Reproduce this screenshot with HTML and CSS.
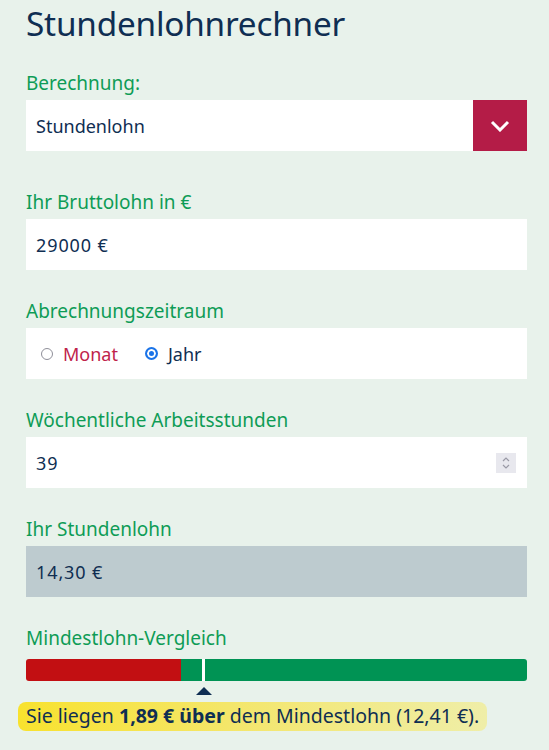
FILE: index.html
```html
<!DOCTYPE html>
<html lang="de">
<head>
<meta charset="utf-8">
<link rel="stylesheet" href="styles.css">
</head>
<body>
<div class="calc">
  <h1 class="title">Stundenlohnrechner</h1>

  <div class="field field-first">
    <div class="label">Berechnung:</div>
    <div class="box select">
      <span class="value">Stundenlohn</span>
      <span class="select-btn">
        <svg width="20" height="12" viewBox="0 0 20 12"><path d="M2 2 L10 10 L18 2" fill="none" stroke="#fff" stroke-width="3"/></svg>
      </span>
    </div>
  </div>

  <div class="field field-second">
    <div class="label">Ihr Bruttolohn in €</div>
    <div class="box"><span class="value num">29000 €</span></div>
  </div>

  <div class="field">
    <div class="label">Abrechnungszeitraum</div>
    <div class="box radios">
      <label class="radio"><span class="dot"></span><span class="r-text monat">Monat</span></label>
      <label class="radio"><span class="dot on"></span><span class="r-text">Jahr</span></label>
    </div>
  </div>

  <div class="field">
    <div class="label">Wöchentliche Arbeitsstunden</div>
    <div class="box number">
      <span class="value num">39</span>
      <span class="spin">
        <svg width="20" height="20" viewBox="0 0 20 20"><path d="M7 8 L10 5 L13 8 M7 12 L10 15 L13 12" fill="none" stroke="#9a9aa6" stroke-width="1.2"/></svg>
      </span>
    </div>
  </div>

  <div class="field">
    <div class="label">Ihr Stundenlohn</div>
    <div class="box output"><span class="value num">14,30 €</span></div>
  </div>

  <div class="field">
    <div class="label">Mindestlohn-Vergleich</div>
    <div class="bar">
      <div class="bar-red"></div>
      <div class="bar-green"></div>
      <div class="marker"></div>
      <div class="pointer"></div>
    </div>
    <div class="result">Sie liegen <b>1,89 € über</b> dem Mindestlohn (12,41 €).</div>
  </div>
</div>
</body>
</html>
```

FILE: styles.css
```css
html, body {
  margin: 0;
  padding: 0;
  background: #e8f2eb;
}
body {
  font-family: "Noto Sans", "Open Sans", sans-serif;
  color: #0f2e52;
}
.calc {
  padding: 0 22px 0 26px;
}
.title {
  margin: 0;
  padding-top: 1px;
  height: 45px;
  font-size: 33.3px;
  font-weight: 400;
  line-height: 44px;
  color: #0f2e52;
  letter-spacing: -0.2px;
}
.field {
  margin-top: 29px;
}
.field-first {
  margin-top: 25px;
}
.field-second {
  margin-top: 39px;
}
.label {
  font-size: 19px;
  line-height: 24px;
  color: #0e9c56;
  margin-bottom: 5px;
}
.box {
  height: 51px;
  background: #fff;
  display: flex;
  align-items: center;
  position: relative;
}
.value {
  padding-left: 10px;
  font-size: 18px;
  color: #0f2e52;
}
.value.num {
  letter-spacing: 0.9px;
}
.select {
  justify-content: space-between;
}
.select-btn {
  width: 54px;
  height: 51px;
  background: #b41c47;
  display: flex;
  align-items: center;
  justify-content: center;
}
.radios {
  padding-left: 15px;
  gap: 27px;
}
.radio {
  display: flex;
  align-items: center;
  gap: 10px;
}
.dot {
  width: 10px;
  height: 10px;
  border-radius: 50%;
  border: 1.5px solid #8f8f99;
  box-sizing: content-box;
  flex: none;
}
.dot.on {
  width: 9px;
  height: 9px;
  border: 2px solid #1a73e8;
  background: #1a73e8;
  box-shadow: inset 0 0 0 2px #fff;
}
.r-text {
  font-size: 18px;
  color: #0f2e52;
}
.r-text.monat {
  color: #c0234b;
}
.number {
  justify-content: space-between;
}
.spin {
  width: 20px;
  height: 20px;
  background: #e8e8ee;
  margin-right: 11px;
  display: flex;
}
.output {
  background: #bdcbcf;
}
.bar {
  position: relative;
  margin-top: 9px;
  height: 22px;
  display: flex;
}
.bar-red {
  width: 155px;
  background: #c20f12;
  border-radius: 3px 0 0 3px;
}
.bar-green {
  flex: 1;
  background: #009354;
  border-radius: 0 3px 3px 0;
}
.marker {
  position: absolute;
  left: 176px;
  top: 0;
  width: 3px;
  height: 22px;
  background: #fff;
}
.pointer {
  position: absolute;
  left: 170px;
  top: 28px;
  width: 0;
  height: 0;
  border-left: 8px solid transparent;
  border-right: 8px solid transparent;
  border-bottom: 8px solid #0f2e52;
}
.result {
  display: inline-block;
  margin: 21px 0 0 -8px;
  padding: 1px 8px 2px;
  font-size: 19.5px;
  line-height: 26px;
  border-radius: 8px;
  background: linear-gradient(90deg, #f8e22e 0%, #f4e66a 45%, #efeea8 100%);
  color: #0f2e52;
}
.result b {
  font-weight: 700;
}
```
